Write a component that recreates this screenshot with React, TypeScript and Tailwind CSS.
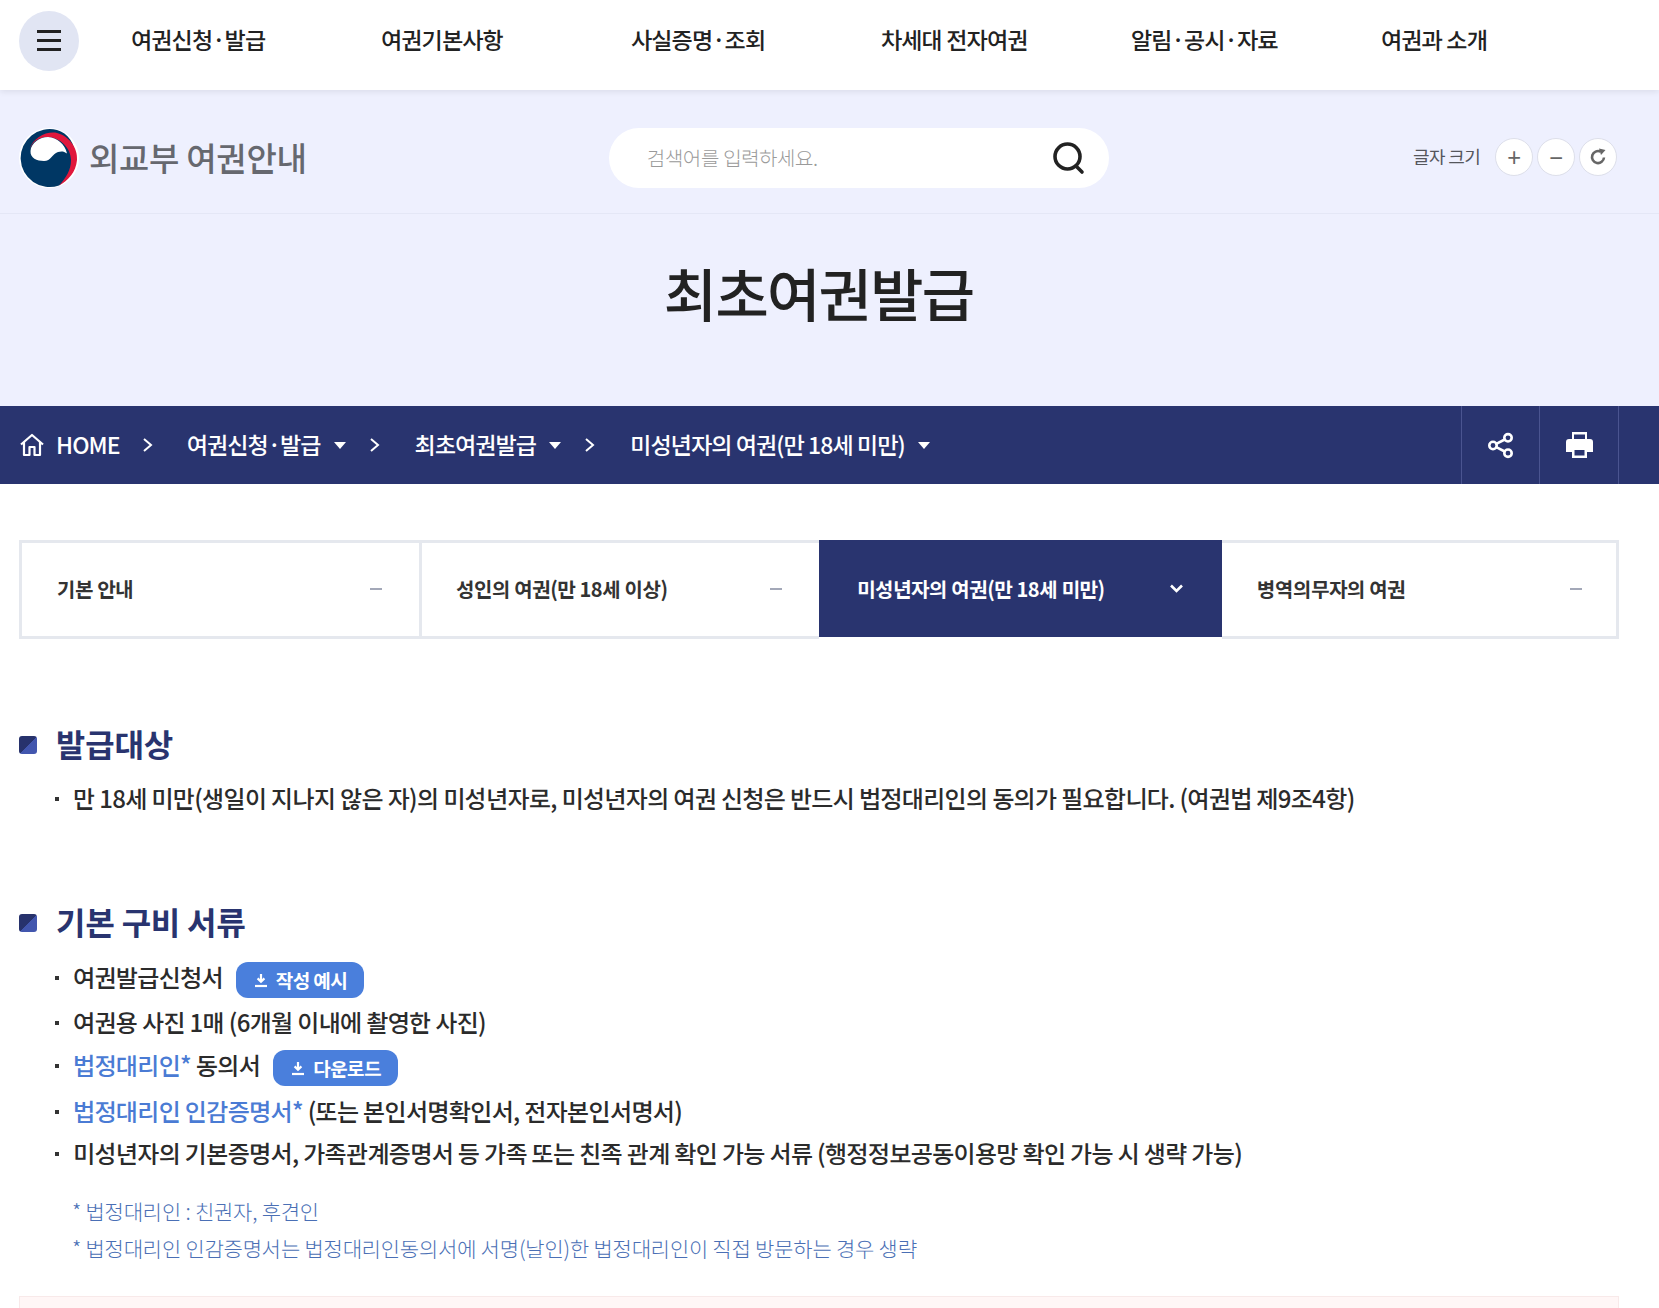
import React from "react";

const font = "font-['Noto_Sans_KR','Noto_Sans_CJK_KR',sans-serif]";

function Caret() {
  return <span className="ml-[13px] inline-block h-0 w-0 border-x-[6px] border-t-[7px] border-x-transparent border-t-white" />;
}

function Chevron() {
  return (
    <svg width="11" height="18" viewBox="0 0 11 18" fill="none" stroke="white" strokeWidth="2">
      <path d="M2 3l7 6-7 6" />
    </svg>
  );
}

function DownloadIcon() {
  return (
    <svg width="16" height="16" viewBox="0 0 16 16" fill="none" stroke="white" strokeWidth="2.2">
      <path d="M8 2v7.5M4.6 6.4L8 9.8l3.4-3.4" />
      <path d="M2 14h12" />
    </svg>
  );
}

function Heading({ children }: { children: React.ReactNode }) {
  return (
    <div className="flex items-center">
      <span className="relative top-[2px] h-[18px] w-[18px] rounded-[3px] bg-[linear-gradient(135deg,#27326c_50%,#4256ae_50%)]" />
      <h2 className="ml-[19px] text-[32px] font-bold leading-[46px] tracking-[-0.2px] text-[#29346f]">{children}</h2>
    </div>
  );
}

function Item({ children, className = "" }: { children: React.ReactNode; className?: string }) {
  return (
    <li className={`flex items-center text-[24px] font-medium leading-[36px] tracking-[-0.66px] text-[#2b2b2b] ${className}`}>
      <span className="relative top-[1px] ml-[36px] mr-[14px] h-[4px] w-[4px] shrink-0 bg-[#333]" />
      {children}
    </li>
  );
}

function Btn({ children, w }: { children: React.ReactNode; w: string }) {
  return (
    <span className={`relative top-[3px] ml-[13px] flex h-[36px] ${w} items-center justify-center gap-[7px] rounded-[12px] bg-[#4a7fdc] text-[19px] font-bold tracking-[-0.6px] text-white`}>
      <DownloadIcon />
      {children}
    </span>
  );
}

export default function App() {
  const nav = ["여권신청·발급", "여권기본사항", "사실증명·조회", "차세대 전자여권", "알림·공시·자료", "여권과 소개"];
  return (
    <div className={`${font} h-[1308px] overflow-hidden bg-white`}>
      <header className="relative z-10 flex h-[90px] items-center bg-white pb-[9px] pl-[19px] shadow-[0_2px_6px_rgba(0,0,0,0.08)]">
        <button className="flex h-[60px] w-[60px] flex-col items-center justify-center gap-[6px] rounded-full bg-[#e1e5f3]">
          <span className="h-[3px] w-[24px] bg-[#222]" />
          <span className="h-[3px] w-[24px] bg-[#222]" />
          <span className="h-[3px] w-[24px] bg-[#222]" />
        </button>
        <nav className="-mt-[3px] ml-[52px] flex">
          {nav.map((n) => (
            <a key={n} className="w-[250px] text-[23px] font-medium tracking-[-0.85px] text-[#222]">{n}</a>
          ))}
        </nav>
      </header>

      <section className="bg-[#eef0fe]">
        <div className="flex h-[124px] items-center border-b border-[#e4e7f6] pl-[19px] pt-[12px]">
          <svg width="60" height="60" viewBox="0 0 60 60" className="shrink-0">
            <circle cx="30" cy="30" r="30" fill="#fff" />
            <path d="M40 57.5A29 29 0 1 1 38 2C50 5 58 18 56 34C54 46 48 52 40 57.5Z" fill="#003764" />
            <path d="M10.5 22C14 9 28 3 38 5C50 8 59 20 58 32C57 44 49 53 40 57.5C47 50 52 42 52 32C52 20 41 9 28 9C20 9 13 14 10.5 22Z" fill="#e0173c" />
            <path d="M11.5 23C12 15 21 9 29 9C38 9.5 46 16 48 25.5C45 23 42 23 39 24C33 26 32 33 25 33C18 33 11 30 11.5 23Z" fill="#fff" />
          </svg>
          <span className="ml-[10px] w-[289px] text-[33px] font-medium tracking-[-0.3px] text-[#66686f]">외교부 여권안내</span>
          <div className="ml-[231px] flex h-[60px] w-[500px] items-center justify-between rounded-full bg-white pl-[38px] pr-[24px]">
            <span className="text-[20px] font-light tracking-[-0.4px] text-[#9a9a9a]">검색어를 입력하세요.</span>
            <svg width="34" height="34" viewBox="0 0 34 34" fill="none" stroke="#222" strokeWidth="3.6">
              <circle cx="16.5" cy="15.5" r="12.5" />
              <path d="M25 25l6 6" strokeLinecap="round" />
            </svg>
          </div>
          <span className="-mt-[2px] ml-[304px] text-[18px] font-normal tracking-[-0.6px] text-[#55565c]">글자 크기</span>
          <div className="-mt-[1px] ml-[15px] flex gap-[4px]">
            {["+", "−"].map((s) => (
              <span key={s} className="flex h-[38px] w-[38px] items-center justify-center rounded-full border border-[#dddfea] bg-white text-[24px] leading-none text-[#666]">{s}</span>
            ))}
            <span className="flex h-[38px] w-[38px] items-center justify-center rounded-full border border-[#dddfea] bg-white">
              <svg width="18" height="18" viewBox="0 0 18 18" fill="none" stroke="#666" strokeWidth="2.6">
                <path d="M15 9.5A6 6 0 1 1 11.5 3.6" />
                <path d="M10 0.5l6.5 1.5-4.5 5z" fill="#666" stroke="none" />
              </svg>
            </span>
          </div>
        </div>
        <div className="flex h-[192px] items-start justify-center pr-[22px] pt-[42px]">
          <h1 className="text-[58px] font-medium leading-[72px] tracking-[-1.8px] text-[#222]">최초여권발급</h1>
        </div>
      </section>

      <div className="flex h-[78px] items-center bg-[#29346f] pl-[19px] pr-[40px] text-white">
        <svg width="26" height="26" viewBox="0 0 26 26" fill="none" stroke="white" strokeWidth="2.2" strokeLinejoin="round">
          <path d="M2 12.5L13 3l11 9.5" />
          <path d="M5 10v13h5.5v-8h5v8H21V10" />
        </svg>
        <span className="-mt-[2px] ml-[11px] text-[23px] font-medium tracking-[-0.9px]">HOME</span>
        <span className="ml-[22px]"><Chevron /></span>
        <span className="-mt-[2px] ml-[34px] text-[23px] font-medium tracking-[-0.9px]">여권신청·발급</span>
        <Caret />
        <span className="ml-[23px]"><Chevron /></span>
        <span className="-mt-[2px] ml-[35px] text-[23px] font-medium tracking-[-0.9px]">최초여권발급</span>
        <Caret />
        <span className="ml-[23px]"><Chevron /></span>
        <span className="-mt-[2px] ml-[35px] text-[23px] font-medium tracking-[-0.9px]">미성년자의 여권(만 18세 미만)</span>
        <Caret />
        <div className="ml-auto flex h-full">
          <span className="flex w-[78px] items-center justify-center border-l border-[#4a5490]">
            <svg width="27" height="27" viewBox="0 0 27 27" fill="none" stroke="white" strokeWidth="2.6">
              <circle cx="6" cy="13.5" r="3.7" />
              <circle cx="21" cy="5.8" r="3.7" />
              <circle cx="21" cy="21.2" r="3.7" />
              <path d="M9.3 11.8l8.4-4.3M9.3 15.2l8.4 4.3" />
            </svg>
          </span>
          <span className="flex w-[80px] items-center justify-center border-x border-[#4a5490]">
            <svg width="27" height="26" viewBox="0 0 27 26" fill="white">
              <path d="M6 0h15v8H6z M8 2.5v5h11v-5z" fillRule="evenodd" />
              <path d="M3 7h21a3 3 0 0 1 3 3v10h-6v-6H6v6H0V10a3 3 0 0 1 3-3z" />
              <path d="M6 14h15v12H6z M8.5 18v5.5h10V18z" fillRule="evenodd" />
            </svg>
          </span>
        </div>
      </div>

      <main className="pl-[19px] pr-[40px] pt-[56px]">
        <div className="flex h-[99px] w-[1600px]">
          <div className="flex w-[403px] items-center justify-between border-[3px] border-[#e5e8ee] pb-[2px] pl-[35px] pr-[37px] text-[20px] font-bold tracking-[-0.4px] text-[#333]">
            기본 안내<span className="h-[2px] w-[12px] bg-[#a3a8b8]" />
          </div>
          <div className="flex w-[397px] items-center justify-between border-y-[3px] border-[#e5e8ee] pb-[2px] pl-[34px] pr-[37px] text-[20px] font-bold tracking-[-0.4px] text-[#333]">
            성인의 여권(만 18세 이상)<span className="h-[2px] w-[12px] bg-[#a3a8b8]" />
          </div>
          <div className="flex h-[97px] w-[403px] items-center justify-between bg-[#29346f] pl-[38px] pr-[39px] text-[20px] font-bold tracking-[-0.4px] text-white">
            미성년자의 여권(만 18세 미만)
            <svg width="13" height="9" viewBox="0 0 13 9" fill="none" stroke="white" strokeWidth="2.6"><path d="M1 1.5l5.5 5.5L12 1.5" /></svg>
          </div>
          <div className="flex w-[397px] items-center justify-between border-y-[3px] border-r-[3px] border-[#e5e8ee] pb-[2px] pl-[35px] pr-[34px] text-[20px] font-bold tracking-[-0.4px] text-[#333]">
            병역의무자의 여권<span className="h-[2px] w-[12px] bg-[#a3a8b8]" />
          </div>
        </div>

        <div className="mt-[81px]">
          <Heading>발급대상</Heading>
          <ul className="mt-[14px]">
            <Item>만 18세 미만(생일이 지나지 않은 자)의 미성년자로, 미성년자의 여권 신청은 반드시 법정대리인의 동의가 필요합니다. (여권법 제9조4항)</Item>
          </ul>
        </div>

        <div className="mt-[82px]">
          <Heading>기본 구비 서류</Heading>
          <ul className="mt-[15px] flex flex-col gap-[8px]">
            <Item>여권발급신청서<Btn w="w-[128px]">작성 예시</Btn></Item>
            <Item className="mt-[1px]">여권용 사진 1매 (6개월 이내에 촬영한 사진)</Item>
            <Item className="-mt-[1px]"><span className="text-[#4a7bd4]">법정대리인*</span>&nbsp;동의서<Btn w="w-[125px]">다운로드</Btn></Item>
            <Item className="mt-[2px]"><span className="text-[#4a7bd4]">법정대리인 인감증명서*</span>&nbsp;(또는 본인서명확인서, 전자본인서명서)</Item>
            <Item className="-mt-[2px]">미성년자의 기본증명서, 가족관계증명서 등 가족 또는 친족 관계 확인 가능 서류 (행정정보공동이용망 확인 가능 시 생략 가능)</Item>
          </ul>
          <div className="ml-[53px] mt-[25px] flex flex-col gap-[7px] text-[21px] font-light leading-[30px] tracking-[-0.22px] text-[#4a6fb5]">
            <p>* 법정대리인 : 친권자, 후견인</p>
            <p>* 법정대리인 인감증명서는 법정대리인동의서에 서명(날인)한 법정대리인이 직접 방문하는 경우 생략</p>
          </div>
        </div>

        <div className="mt-[33px] h-[40px] border border-[#f8e9e9] bg-[#fff6f6]" />
      </main>
    </div>
  );
}
